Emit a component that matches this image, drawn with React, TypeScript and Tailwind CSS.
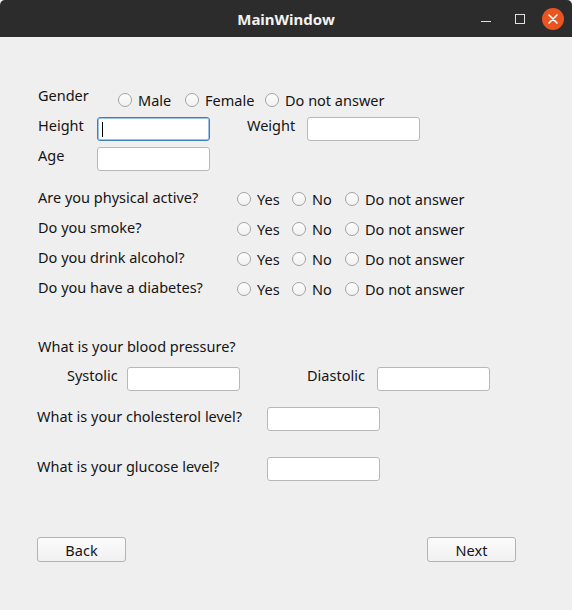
const font = { fontFamily: '"Noto Sans", "Open Sans", sans-serif' };

function Radio({ label, width }: { label: string; width?: string }) {
  return (
    <label className={`flex h-[20px] items-center ${width ?? ''}`}>
      <span className="h-[14px] w-[14px] rounded-full border border-[#a3a3a3] bg-gradient-to-b from-[#fdfdfd] to-[#f1f1f1]" />
      <span className="ml-[6px]">{label}</span>
    </label>
  );
}

function Field({ focused = false }: { focused?: boolean }) {
  return (
    <div
      className={`relative h-[24px] w-[113px] rounded-[3px] border bg-white ${
        focused ? 'border-[#3f7fb8] shadow-[inset_0_0_0_1px_#9cc3e4]' : 'border-[#b8b8b8]'
      }`}
    >
      {focused && <span className="absolute left-[4px] top-[4px] h-[15px] w-px bg-black" />}
    </div>
  );
}

function Question({ text }: { text: string }) {
  return (
    <div className="flex h-[20px] items-center">
      <span className="-mt-[5px] w-[199px]">{text}</span>
      <Radio label="Yes" width="w-[55px]" />
      <Radio label="No" width="w-[53px]" />
      <Radio label="Do not answer" />
    </div>
  );
}

export default function App() {
  return (
    <div className="flex h-[610px] w-[572px] flex-col bg-[#efefef] text-[14.5px] leading-[20px] text-[#141414]" style={font}>
      {/* title bar */}
      <div className="relative flex h-[37px] shrink-0 items-center justify-center rounded-t-[5px] bg-[#2c2c2c]">
        <span className="text-[15px] font-bold text-[#f2f2f2]">MainWindow</span>
        <div className="absolute right-[8px] top-0 flex h-[37px] items-center">
          <span className="mt-[6px] h-[1.5px] w-[10px] bg-[#e0e0e0]" />
          <span className="ml-[24px] h-[10px] w-[10px] border border-[#e0e0e0]" />
          <span className="ml-[17px] flex h-[22px] w-[22px] items-center justify-center rounded-full bg-[#e95420]">
            <svg width="10" height="10" viewBox="0 0 10 10">
              <path d="M1 1 L9 9 M9 1 L1 9" stroke="#fff" strokeWidth="1.6" strokeLinecap="round" />
            </svg>
          </span>
        </div>
      </div>

      <div className="flex flex-col pl-[38px]">
        {/* gender */}
        <div className="mt-[49px] flex h-[24px] items-start">
          <span className="-mt-[1px] w-[80px]">Gender</span>
          <div className="mt-[4px] flex">
            <Radio label="Male" width="w-[67px]" />
            <Radio label="Female" width="w-[80px]" />
            <Radio label="Do not answer" />
          </div>
        </div>

        {/* height / weight */}
        <div className="mt-[7px] flex h-[24px] items-start">
          <span className="-mt-[2px] w-[59px]">Height</span>
          <Field focused />
          <span className="-mt-[2px] ml-[37px] w-[60px]">Weight</span>
          <Field />
        </div>
        <div className="mt-[6px] flex h-[24px] items-start">
          <span className="-mt-[2px] w-[59px]">Age</span>
          <Field />
        </div>

        {/* yes/no questions */}
        <div className="mt-[18px] flex flex-col gap-[10px]">
          <Question text="Are you physical active?" />
          <Question text="Do you smoke?" />
          <Question text="Do you drink alcohol?" />
          <Question text="Do you have a diabetes?" />
        </div>

        {/* blood pressure */}
        <div className="mt-[37px] h-[20px]">What is your blood pressure?</div>
        <div className="mt-[11px] flex h-[24px] items-start pl-[29px]">
          <span className="-mt-[2px] w-[60px]">Systolic</span>
          <Field />
          <span className="-mt-[2px] ml-[67px] w-[70px]">Diastolic</span>
          <Field />
        </div>

        <div className="-ml-px mt-[16px] flex h-[24px] items-start">
          <span className="-mt-[1px] w-[230px]">What is your cholesterol level?</span>
          <Field />
        </div>
        <div className="-ml-px mt-[26px] flex h-[24px] items-start">
          <span className="-mt-[1px] w-[230px]">What is your glucose level?</span>
          <Field />
        </div>

        {/* navigation */}
        <div className="-ml-px mt-[56px] flex w-[479px] justify-between">
          <button className="h-[25px] w-[89px] rounded-[3px] border border-[#b3b3b3] bg-gradient-to-b from-[#fcfcfc] to-[#f0f0f0]">
            Back
          </button>
          <button className="h-[25px] w-[89px] rounded-[3px] border border-[#b3b3b3] bg-gradient-to-b from-[#fcfcfc] to-[#f0f0f0]">
            Next
          </button>
        </div>
      </div>
    </div>
  );
}
